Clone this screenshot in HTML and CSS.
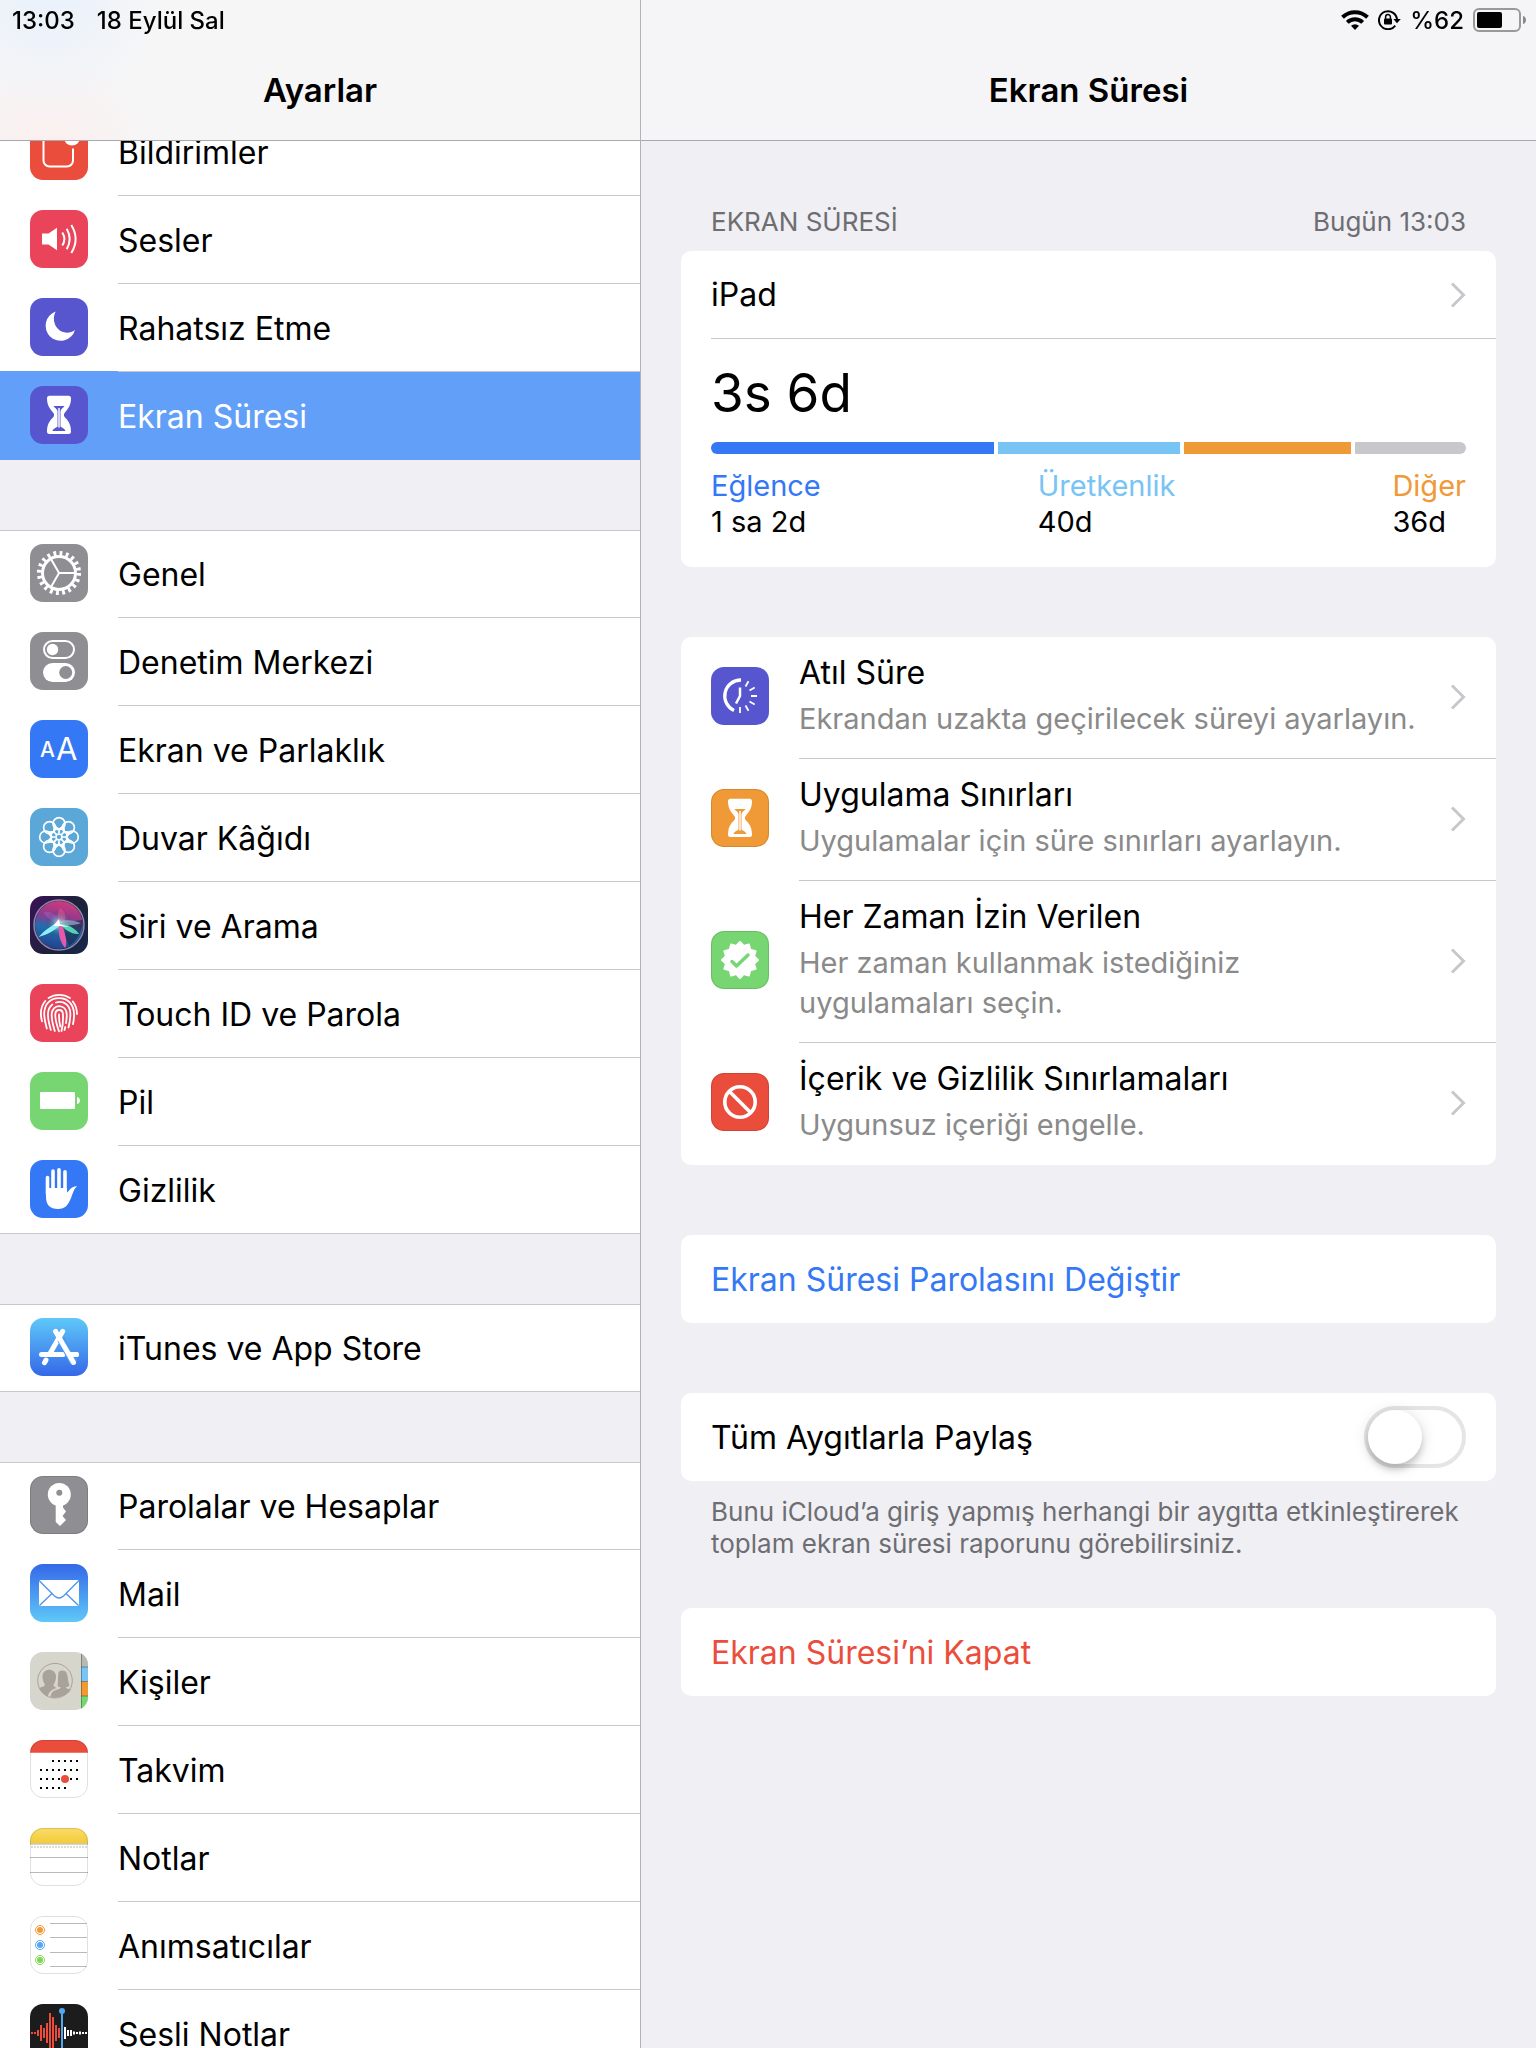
FILE: index.html
```html
<!DOCTYPE html>
<html lang="tr">

<head>
    <meta charset="UTF-8">
    <meta name="viewport" content="width=device-width, initial-scale=1.0">
    <title>Ekran Süresi</title>
    <link rel="stylesheet" href="styles.css">
</head>

<body>

    <!-- Status bar -->
    <div class="status-bar">
        <div class="status-side">
            <span>13:03</span>
            <span>18 Eylül Sal</span>
        </div>
        <div class="status-side status-right">
            <svg width="28" height="20" viewBox="0 0 28 20" fill="none" stroke="#000" stroke-width="4">
                <path d="M1.5 7.2a18 18 0 0 1 25 0" />
                <path d="M6.3 12.4a11 11 0 0 1 15.4 0" />
                <path d="M14 20l-4-4.2a5.8 5.8 0 0 1 8 0z" fill="#000" stroke="none" />
            </svg>
            <svg class="lock" width="23" height="20" viewBox="0 0 23 20" fill="none" stroke="#000" stroke-width="2">
                <path d="M17.2 15.6A9 9 0 1 1 19 10" />
                <path d="M15.4 9h7.4L19 13.2z" fill="#000" stroke="none" />
                <rect x="6" y="8.6" width="8" height="6" rx="1" fill="#000" stroke="none" />
                <path d="M7.6 9V7a2.4 2.4 0 0 1 4.8 0v2" stroke-width="1.5" />
            </svg>
            <span>%62</span>
            <svg width="54" height="24" viewBox="0 0 54 24">
                <rect x="1" y="1" width="46" height="22" rx="5" fill="none" stroke="#999" stroke-width="2" />
                <rect x="4" y="4" width="25" height="16" rx="2" fill="#000" />
                <path d="M50 8c4 1 4 7 0 8z" fill="#888" />
            </svg>
        </div>
    </div>

    <div class="layout">

        <!-- Sidebar -->
        <nav class="sidebar">
            <header class="title-bar title-bar-side">
                <h1>Ayarlar</h1>
            </header>
            <div class="menu">
                <div class="group">
                    <a class="menu-item" href="#">
                        <svg class="icon red" viewBox="0 0 58 58" fill="none">
                            <path d="M32 13.5H19.5a6 6 0 0 0-6 6v19a6 6 0 0 0 6 6h17.500a6 6 0 0 0 6-6V26.500" stroke="#fff" stroke-width="2" />
                            <circle cx="42" cy="15.500" r="8" fill="#fff" />
                        </svg>
                        <span class="label">Bildirimler</span>
                    </a>
                    <a class="menu-item" href="#">
                        <svg class="icon pink" viewBox="0 0 58 58" fill="none">
                            <path d="M12 23.500h6.500L27 17.700v22.600l-8.500-5.800H12z" fill="#fff" />
                            <path d="M32.300 22.500q4.200 6.500 0 13M36.700 18.700q6 10.300 0 20.600M41.300 15q8.600 14 0 28" stroke="#fff" stroke-width="2" />
                        </svg>
                        <span class="label">Sesler</span>
                    </a>
                    <a class="menu-item" href="#">
                        <svg class="icon purple" viewBox="0 0 58 58">
                            <path d="M25.700 13.600A15 15 0 1 0 45 32C38 37.500 28 34 25 26.500C23.200 22 23.600 17.500 25.700 13.600z" fill="#fff" />
                        </svg>
                        <span class="label">Rahatsız Etme</span>
                    </a>
                    <a class="menu-item active" href="#" aria-current="page">
                        <svg class="icon purple" viewBox="0 0 58 58">
                            <path d="M19.500 9.700h19a2.500 2.500 0 0 1 2.500 2.500C41 20 37.500 23 35 26.500c-1.500 2-1.500 3 0 5C37.500 34 41 37.500 41 45.500a2.500 2.500 0 0 1-2.500 2.500h-19a2.500 2.500 0 0 1-2.500-2.500C17 37.500 20.500 34 23 31.500c1.500-2 1.500-3 0-5C20.500 23 17 20 17 12.200a2.500 2.500 0 0 1 2.500-2.500z" fill="#fff" />
                            <path d="M23.500 20h11c-1 2-3.500 2.500-4 5v15.500c1.500 1.500 4 1.500 5 4.500H22.500c1-3 3.500-3 5-4.500V25c-.5-2.500-3-3-4-5z" fill="#5756ce" />
                            <path d="M29 22v19.500" stroke="#fff" stroke-width="1.500" />
                        </svg>
                        <span class="label">Ekran Süresi</span>
                    </a>
                </div>

                <div class="group">
                    <a class="menu-item" href="#">
                        <svg class="icon gray" viewBox="0 0 58 58" fill="none" stroke="#fff">
                            <circle cx="29" cy="29" r="19.700" stroke-width="4.800" stroke-dasharray="2.800 3.389" />
                            <circle cx="29" cy="29" r="16.500" stroke-width="3" />
                            <path d="M29 29h16M29 29l-8-14M29 29l-8 14" stroke-width="2" />
                        </svg>
                        <span class="label">Genel</span>
                    </a>
                    <a class="menu-item" href="#">
                        <svg class="icon gray" viewBox="0 0 58 58">
                            <rect x="14" y="9" width="30" height="17" rx="8.500" fill="none" stroke="#fff" stroke-width="2" />
                            <circle cx="22.500" cy="17.500" r="5.700" fill="#fff" />
                            <rect x="13" y="31" width="32" height="19" rx="9.500" fill="#fff" />
                            <circle cx="35.700" cy="40.500" r="6.500" fill="#8e8e93" />
                        </svg>
                        <span class="label">Denetim Merkezi</span>
                    </a>
                    <a class="menu-item" href="#">
                        <svg class="icon blue" viewBox="0 0 58 58" fill="#fff" aria-hidden="true">
                            <text class="glyph glyph-small" x="10" y="37">A</text>
                            <text class="glyph" x="26" y="40">A</text>
                        </svg>
                        <span class="label">Ekran ve Parlaklık</span>
                    </a>
                    <a class="menu-item" href="#">
                        <svg class="icon sky" viewBox="-29 -29 58 58" fill="none" stroke="#fff" stroke-width="1.700">
                            <defs>
                                <g id="petal">
                                    <circle cy="-13.300" r="6" />
                                    <path d="M0-3.500V-7.500L-4.500-11M0-7.500L4.500-11" />
                                </g>
                            </defs>
                            <circle r="3" />
                            <use href="#petal" />
                            <use href="#petal" transform="rotate(45)" />
                            <use href="#petal" transform="rotate(90)" />
                            <use href="#petal" transform="rotate(135)" />
                            <use href="#petal" transform="rotate(180)" />
                            <use href="#petal" transform="rotate(225)" />
                            <use href="#petal" transform="rotate(270)" />
                            <use href="#petal" transform="rotate(315)" />
                        </svg>
                        <span class="label">Duvar Kâğıdı</span>
                    </a>
                    <a class="menu-item" href="#">
                        <svg class="icon siri" viewBox="0 0 58 58" fill="none">
                            <defs>
                                <linearGradient id="orb" x1="0.600" y1="0" x2="0.400" y2="1">
                                    <stop offset="0" stop-color="#d23a7c" />
                                    <stop offset="0.350" stop-color="#8c3a8e" />
                                    <stop offset="0.600" stop-color="#1f6fae" />
                                    <stop offset="1" stop-color="#243f8c" />
                                </linearGradient>
                                <radialGradient id="orbShade">
                                    <stop offset="0" stop-color="#fff" stop-opacity="0.900" />
                                    <stop offset="0.300" stop-color="#7fe8f0" stop-opacity="0.500" />
                                    <stop offset="1" stop-color="#17233f" stop-opacity="0" />
                                </radialGradient>
                            </defs>
                            <circle cx="29" cy="29" r="24" fill="url(#orb)" />
                            <path d="M30 27L53 24c-1 14-6 20-14 26z" fill="#1c2c4c" opacity="0.700" />
                            <path d="M29 28C20 24 14 20 14 16c8-1 14 4 15 12z" fill="#9a56b8" opacity="0.700" />
                            <path d="M29 28c-3-5-1-11 1-16 6 4 8 11 1 16z" fill="#f0508c" opacity="0.600" />
                            <circle cx="29" cy="28" r="14" fill="url(#orbShade)" />
                            <path d="M30 27C24 27 15 34 8.500 41c8-2 17-7 22-12z" fill="#8cf0f4" />
                            <path d="M30 27c-3 9 0 19 5 25 3-5 0-16-4-25z" fill="#e85aa8" />
                            <path d="M29 27c7 0 16 5 20 11-7 1-15-5-20-11z" fill="#55d3b4" />
                            <path d="M27 26c8-3 17-2 24 1-7 3-16 3-24-1z" fill="#a6c7dd" opacity="0.600" />
                            <path d="M23 30l6-7 1 5 9 3-9-1z" fill="#fff" />
                            <circle cx="29" cy="29" r="25" stroke="#8d87a8" stroke-width="1.500" />
                        </svg>
                        <span class="label">Siri ve Arama</span>
                    </a>
                    <a class="menu-item" href="#">
                        <svg class="icon pink" viewBox="0 0 58 58" fill="none" stroke="#fff" stroke-width="1.800" stroke-linecap="round">
                            <path d="M18.500 14C25 9.700 33.500 9.700 40 14" />
                            <path d="M15.300 17C11 22 9.800 29 12 37.300M42.800 17.500C45.500 21 47 25.500 47 30" />
                            <path d="M16.800 44.500C15 38 14 34 14.200 29C14.700 19 21 14.200 29 14.200c9 0 14.500 6 15 15c.2 4-.3 7.500-1 11" />
                            <path d="M20.800 45.800C18.500 38 17.800 34 18 29.500c.2-4 1.800-7 4.300-9M26 18.500c8-2.500 14 3 14.300 10.500c.2 6-.8 10.500-1.800 14.500" />
                            <path d="M24.800 47C22.300 39 21.500 34 21.700 30c.3-4.500 3.300-7.800 7.300-7.800 4.500 0 7.500 3.300 7.700 8 .2 3-.2 6-.7 9M35.300 43l-.8 3" />
                            <path d="M29 47.300C26 39 25.200 34.500 25.300 30.500c.2-6 7.500-6 7.700 0 .2 6-.3 12-1.500 16.500" />
                            <path d="M29 30.500c0 5 .5 9 1.300 12" />
                        </svg>
                        <span class="label">Touch ID ve Parola</span>
                    </a>
                    <a class="menu-item" href="#">
                        <svg class="icon green" viewBox="0 0 58 58" fill="#fff">
                            <rect x="10" y="20" width="35" height="17" rx="1" />
                            <path d="M47 25c4 1 4 6 0 7z" />
                        </svg>
                        <span class="label">Pil</span>
                    </a>
                    <a class="menu-item" href="#">
                        <svg class="icon blue" viewBox="0 0 58 58" fill="#fff">
                            <path d="M16 28h21v4.500c2.500-1.500 4-6.500 10.300-6.200C43.500 29 43 33.500 41 38c-3 7-5.500 11-13 11-8 0-12-4-12-12z" />
                            <path d="M17.500 17.500V34M23 11v22M29 9.800V33M35 11.700V33" stroke="#fff" stroke-width="3.600" stroke-linecap="round" />
                        </svg>
                        <span class="label">Gizlilik</span>
                    </a>
                </div>

                <div class="group">
                    <a class="menu-item" href="#">
                        <svg class="icon appstore" viewBox="0 0 58 58" fill="none" stroke="#fff" stroke-width="5" stroke-linecap="round">
                            <path d="M32.700 13.300L20 35.500M16 42l-1.500 2.700M11.500 36.500H33M40 36.500h6.500" />
                            <path d="M31 21L44 45" stroke="#4a9af1" stroke-width="8" stroke-linecap="butt" />
                            <path d="M25.500 13.300L43.500 44.500M41 36.500h5.500" />
                        </svg>
                        <span class="label">iTunes ve App Store</span>
                    </a>
                </div>

                <div class="group">
                    <a class="menu-item" href="#">
                        <svg class="icon gray edge" viewBox="0 0 58 58">
                            <path d="M25.700 28h7.300v3.500l3 4-3.500 4.500 3.500 4-6 6-4.300-4z" fill="#fff" />
                            <circle cx="29.300" cy="18.500" r="11.500" fill="#fff" />
                            <circle cx="29.300" cy="16.700" r="3" fill="#8e8e93" />
                        </svg>
                        <span class="label">Parolalar ve Hesaplar</span>
                    </a>
                    <a class="menu-item" href="#">
                        <svg class="icon mail" viewBox="0 0 58 58" fill="none">
                            <rect x="9" y="16" width="40" height="26" rx="1" fill="#fff" />
                            <path d="M9 16.500L24.500 32q4.500 4 9 0L49 16.500M9.500 41.500L22 29.500M48.500 41.500L36 29.500" stroke="#4a94f0" stroke-width="1.300" />
                        </svg>
                        <span class="label">Mail</span>
                    </a>
                    <a class="menu-item" href="#">
                        <svg class="icon contacts" viewBox="0 0 58 58">
                            <path d="M51 0h7v15h-7z" fill="#b9b8b1" />
                            <path d="M51 15h7v14.500h-7z" fill="#77c4f5" />
                            <path d="M51 29.500h7V44h-7z" fill="#f09a37" />
                            <path d="M51 44h7v14h-7z" fill="#77d672" />
                            <path d="M51.500 0v58M51 15h7M51 29.500h7M51 44h7" stroke="#000" stroke-opacity="0.300" />
                            <circle cx="25" cy="28.700" r="17.300" fill="none" stroke="#a9a29b" />
                            <path d="M9 36c3-1 5.500-1.500 6-3.500-2-3-2.500-5-2.500-8 0-9 13.500-9 13.500 0 0 3-.5 5-2.500 8 .3 2 1 2.500 3.500 3.500-5 1-8.500 4-9 8.500C13.500 43 11 40 9 36z" fill="#a9a29b" />
                            <path d="M27.500 33.500c1-3 0-12 1.500-14 2.500-2 6.500-1 7.500 1 2 4 1 9 3 13-1 1.500-2 1.500-3.500 1.500 0 1.500 2 2 5 2.500-3.500 6-11 8.500-20.500 8 .5-5 2.500-7 7-8 2-.5 3-1 3-2.500-1.500 0-2.300-.5-3-1.500z" fill="#a9a29b" />
                        </svg>
                        <span class="label">Kişiler</span>
                    </a>
                    <a class="menu-item" href="#">
                        <svg class="icon paper edge" viewBox="0 0 58 58">
                            <path d="M0 0h58v12.700H0z" fill="#eb4d3d" />
                            <path d="M22 21h26M10 30h38M10 39h38M10 48h26" stroke="#000" stroke-width="2" stroke-dasharray="2 4" />
                            <circle cx="35" cy="39" r="4" fill="#eb4d3d" />
                        </svg>
                        <span class="label">Takvim</span>
                    </a>
                    <a class="menu-item" href="#">
                        <svg class="icon paper edge" viewBox="0 0 58 58">
                            <defs>
                                <linearGradient id="pad" x1="0" y1="0" x2="0" y2="1">
                                    <stop offset="0" stop-color="#f9dc6a" />
                                    <stop offset="1" stop-color="#f3cb36" />
                                </linearGradient>
                            </defs>
                            <path d="M0 0h58v15.500H0z" fill="url(#pad)" />
                            <path d="M0 16h58" stroke="#b1a98c" />
                            <path d="M1 19h57" stroke="#d0d0d0" stroke-width="1.500" stroke-dasharray="2 1" />
                            <path d="M0 29.500h58M0 44.500h58" stroke="#b9b9bd" />
                        </svg>
                        <span class="label">Notlar</span>
                    </a>
                    <a class="menu-item" href="#">
                        <svg class="icon paper edge" viewBox="0 0 58 58" fill="none">
                            <path d="M20 7.500h37M20 21.500h37M20 36.500h37M20 50.500h37" stroke="#b9b9bd" />
                            <g stroke="#f09a37"><circle cx="10" cy="14" r="4.500" /><circle cx="10" cy="14" r="3" fill="#f09a37" stroke="none" /></g>
                            <g stroke="#53a7f0"><circle cx="10" cy="29" r="4.500" /><circle cx="10" cy="29" r="3" fill="#53a7f0" stroke="none" /></g>
                            <g stroke="#7fd551"><circle cx="10" cy="44" r="4.500" /><circle cx="10" cy="44" r="3" fill="#7fd551" stroke="none" /></g>
                        </svg>
                        <span class="label">Anımsatıcılar</span>
                    </a>
                    <a class="menu-item" href="#">
                        <svg class="icon black" viewBox="0 0 58 58" fill="none" stroke-width="2">
                            <path d="M2 28v2M5 28v2M8 26v6M11 21v16M14 24v10M17 19v20M20 9v40M23 13v32M26 21v16M29 24v10" stroke="#eb4d3d" />
                            <path d="M35 23v12M38 26v6M41 26v6M44 27.500v3M47 28v2M50 27.500v3M53 28v2M56 28v2" stroke="#fff" />
                            <path d="M32 7v44" stroke="#53a7f0" />
                            <circle cx="32" cy="7" r="3" fill="#53a7f0" />
                        </svg>
                        <span class="label">Sesli Notlar</span>
                    </a>
                </div>
            </div>
        </nav>

        <!-- Screen time detail -->
        <main class="detail">
            <header class="title-bar">
                <h2>Ekran Süresi</h2>
            </header>
            <div class="content">
                <div class="section-head">
                    <span>EKRAN SÜRESİ</span>
                    <span>Bugün 13:03</span>
                </div>
                <section class="card">
                    <a class="row device" href="#">
                        <span>iPad</span>
                        <svg class="chevron" viewBox="0 0 16 26"><path d="M2 1.500L13.500 13L2 24.500" /></svg>
                    </a>
                    <div class="usage">
                        <div class="total">3s 6d</div>
                        <div class="bar">
                            <span class="fun" style="flex-grow: 283"></span>
                            <span class="work" style="flex-grow: 182"></span>
                            <span class="other" style="flex-grow: 167"></span>
                            <span class="rest" style="flex-grow: 111"></span>
                        </div>
                        <dl class="legend">
                            <div>
                                <dt class="fun-text">Eğlence</dt>
                                <dd>1 sa 2d</dd>
                            </div>
                            <div>
                                <dt class="work-text">Üretkenlik</dt>
                                <dd>40d</dd>
                            </div>
                            <div>
                                <dt class="other-text">Diğer</dt>
                                <dd>36d</dd>
                            </div>
                        </dl>
                    </div>
                </section>

                <section class="card options">
                    <a class="option" href="#">
                        <svg class="icon purple" viewBox="0 0 58 58" fill="none" stroke="#fff">
                            <path d="M30 13a16 16 0 0 0-7 30.500" stroke-width="3.300" />
                            <path d="M29 20.500V29l-4 7.500" stroke-width="2.500" />
                            <path d="M34.500 19.500l3-5.200M38.500 23.500l5.200-3M40 29h6M38.500 34.500l5.200 3M34.500 38.500l3 5.200M29 40v6" stroke-width="1.800" />
                        </svg>
                        <span class="option-body">
                            <span class="option-text">
                                <span class="option-title">Atıl Süre</span>
                                <span class="option-info">Ekrandan uzakta geçirilecek süreyi ayarlayın.</span>
                            </span>
                            <svg class="chevron" viewBox="0 0 16 26"><path d="M2 1.500L13.500 13L2 24.500" /></svg>
                        </span>
                    </a>
                    <a class="option" href="#">
                        <svg class="icon orange edge" viewBox="0 0 58 58">
                            <path d="M19.500 9.700h19a2.500 2.500 0 0 1 2.500 2.500C41 20 37.500 23 35 26.500c-1.500 2-1.500 3 0 5C37.500 34 41 37.500 41 45.500a2.500 2.500 0 0 1-2.500 2.500h-19a2.500 2.500 0 0 1-2.500-2.500C17 37.500 20.500 34 23 31.500c1.500-2 1.500-3 0-5C20.500 23 17 20 17 12.200a2.500 2.500 0 0 1 2.500-2.500z" fill="#fff" />
                            <path d="M23.500 20h11c-1 2-3.500 2.500-4 5v15.500c1.500 1.500 4 1.500 5 4.500H22.500c1-3 3.500-3 5-4.500V25c-.5-2.500-3-3-4-5z" fill="#f09a37" />
                            <path d="M29 22v19.500" stroke="#fff" stroke-width="1.500" />
                        </svg>
                        <span class="option-body">
                            <span class="option-text">
                                <span class="option-title">Uygulama Sınırları</span>
                                <span class="option-info">Uygulamalar için süre sınırları ayarlayın.</span>
                            </span>
                            <svg class="chevron" viewBox="0 0 16 26"><path d="M2 1.500L13.500 13L2 24.500" /></svg>
                        </span>
                    </a>
                    <a class="option" href="#">
                        <svg class="icon green edge" viewBox="-29 -29 58 58">
                            <path d="M0-18L3.700-14L8.900-15.600L10.200-10.200L15.600-8.900L14-3.700L18 0L14 3.700L15.600 8.900L10.200 10.200L8.900 15.600L3.700 14L0 18L-3.700 14L-8.900 15.600L-10.200 10.200L-15.600 8.900L-14 3.700L-18 0L-14-3.700L-15.600-8.900L-10.200-10.200L-8.900-15.600L-3.700-14z" fill="#fff" stroke="#fff" stroke-width="2" stroke-linejoin="round" />
                            <path d="M-8 1.500l4.500 4.500L8-5" fill="none" stroke="#77d672" stroke-width="3.500" stroke-linecap="round" stroke-linejoin="round" />
                        </svg>
                        <span class="option-body">
                            <span class="option-text">
                                <span class="option-title">Her Zaman İzin Verilen</span>
                                <span class="option-info">Her zaman kullanmak istediğiniz<br>uygulamaları seçin.</span>
                            </span>
                            <svg class="chevron" viewBox="0 0 16 26"><path d="M2 1.500L13.500 13L2 24.500" /></svg>
                        </span>
                    </a>
                    <a class="option" href="#">
                        <svg class="icon red edge" viewBox="0 0 58 58" fill="none" stroke="#fff" stroke-width="3.600">
                            <circle cx="29" cy="29" r="15.200" />
                            <path d="M18.500 18.500l21 21" />
                        </svg>
                        <span class="option-body">
                            <span class="option-text">
                                <span class="option-title">İçerik ve Gizlilik Sınırlamaları</span>
                                <span class="option-info">Uygunsuz içeriği engelle.</span>
                            </span>
                            <svg class="chevron" viewBox="0 0 16 26"><path d="M2 1.500L13.500 13L2 24.500" /></svg>
                        </span>
                    </a>
                </section>

                <section class="card">
                    <button class="row link" type="button">Ekran Süresi Parolasını Değiştir</button>
                </section>

                <section class="card">
                    <div class="row">
                        <label for="shareDevices">Tüm Aygıtlarla Paylaş</label>
                        <input class="switch" type="checkbox" id="shareDevices">
                    </div>
                </section>
                <p class="note">Bunu iCloud’a giriş yapmış herhangi bir aygıtta etkinleştirerek toplam ekran süresi raporunu görebilirsiniz.</p>

                <section class="card">
                    <button class="row danger" type="button">Ekran Süresi’ni Kapat</button>
                </section>
            </div>
        </main>
    </div>

</body>

</html>
```

FILE: styles.css
```css
* {
    box-sizing: border-box;
}

body {
    margin: 0;
    background-color: #efeff4;
    color: #000;
}

body,
button {
    font-family: Inter, "Liberation Sans", sans-serif;
    font-size: 32px;
}

a {
    color: inherit;
    text-decoration: none;
}

/* Status bar lies over both title bars */
.status-bar {
    position: absolute;
    top: 0;
    left: 0;
    right: 0;
    z-index: 2;
    height: 40px;
    padding: 0 9px 0 12px;
    display: flex;
    justify-content: space-between;
    align-items: center;
    font-size: 24px;
    font-weight: 500;
}

.status-side {
    display: flex;
    align-items: center;
    gap: 22px;
}

.status-right {
    gap: 9px;
}

.layout {
    display: grid;
    grid-template-columns: 5fr 7fr;
    height: 100vh;
}

.sidebar,
.detail {
    position: relative;
    min-width: 0;
    overflow: hidden;
}

.detail {
    border-left: 1px solid #b2b2b5;
}

/* Title bars stay above the scrolled lists */
.title-bar {
    position: absolute;
    top: 0;
    left: 0;
    right: 0;
    z-index: 1;
    height: 141px;
    padding-top: 40px;
    display: flex;
    justify-content: center;
    align-items: center;
    background-color: #f5f5f7;
    border-bottom: 1px solid #a9a9ad;
}

.title-bar-side {
    background-color: #f6f6f7;
    background-image: radial-gradient(circle at 48px 0, #e9f1fb, transparent 110px),
        radial-gradient(circle at 48px 160px, #fbeeed, transparent 110px);
}

.title-bar h1,
.title-bar h2 {
    margin: 0;
    font-size: 33px;
    font-weight: 600;
}

.menu {
    height: 100%;
    padding-top: 108px;
    overflow-y: auto;
    scrollbar-width: none;
    background-color: #efeff4;
}

.group {
    background-color: #fff;
    margin-bottom: 70px;
    box-shadow: inset 0 1px 0 #c8c7cc, inset 0 -1px 0 #c8c7cc;
}

.group:last-child {
    margin-bottom: 0;
}

.menu-item {
    display: flex;
    gap: 30px;
    height: 88px;
    padding-left: 30px;
}

.menu-item .icon {
    margin-top: 14px;
}

.menu-item .label {
    flex: 1;
    padding-top: 2px;
    line-height: 86px;
    border-bottom: 1px solid #c8c7cc;
    white-space: nowrap;
}

.menu-item:last-child .label {
    border-bottom: none;
}

.menu-item.active {
    background-color: #629ff8;
    box-shadow: 0 -1px 0 #629ff8;
    color: #fff;
}

/* Icons */
.icon {
    display: block;
    flex: none;
    width: 58px;
    height: 58px;
    border-radius: 13px;
}

.glyph {
    font-family: Inter, sans-serif;
    font-size: 31px;
    font-weight: 400;
}

.glyph-small {
    font-size: 21px;
    font-weight: 500;
}

.edge {
    outline: 1px solid rgba(0, 0, 0, 0.12);
    outline-offset: -1px;
}

.red {
    background-color: #eb4d3d;
}

.pink {
    background-color: #ea445a;
}

.purple {
    background-color: #5756ce;
}

.gray {
    background-color: #8e8e93;
}

.blue {
    background-color: #3478f6;
}

.sky {
    background-color: #5aa7d8;
}

.green {
    background-color: #77d672;
}

.orange {
    background-color: #f09a37;
}

.black {
    background-color: #1c1c1c;
}

.paper {
    background-color: #fff;
}

.contacts {
    background-color: #d6d6cd;
}

.siri {
    background-image: linear-gradient(120deg, #3a1258, #1c2238 60%, #17284f);
}

.appstore {
    background-image: linear-gradient(#5fc8f8, #3568e8);
}

.mail {
    background-image: linear-gradient(#3568e8, #5fc8f8);
}

/* Detail column */
.content {
    padding: 201px 40px 40px;
}

.section-head {
    display: flex;
    justify-content: space-between;
    padding: 0 30px 9px;
    font-size: 26px;
    line-height: 41px;
    color: #6d6d72;
}

.card {
    background-color: #fff;
    border-radius: 10px;
    margin-bottom: 70px;
    overflow: hidden;
}

.row {
    display: flex;
    justify-content: space-between;
    align-items: center;
    width: 100%;
    height: 88px;
    padding: 0 30px;
    border: none;
    background: none;
    text-align: left;
}

.device {
    height: 87px;
}

.chevron {
    flex: none;
    width: 16px;
    height: 26px;
    fill: none;
    stroke: #c7c7cc;
    stroke-width: 3px;
}

.link {
    color: #3478f6;
    cursor: pointer;
}

.danger {
    color: #eb4d3d;
    cursor: pointer;
}

.usage {
    margin-left: 30px;
    padding: 24px 30px 27px 0;
    border-top: 1px solid #c8c7cc;
}

.total {
    font-size: 53px;
    line-height: 60px;
}

.bar {
    display: flex;
    gap: 4px;
    height: 12px;
    margin-top: 19px;
    border-radius: 6px;
    overflow: hidden;
}

.fun {
    background-color: #3478f6;
}

.work {
    background-color: #77c4f5;
}

.other {
    background-color: #f09a37;
}

.rest {
    background-color: #c7c7cc;
}

.legend {
    display: flex;
    justify-content: space-between;
    margin: 14px 0 0;
    font-size: 29px;
    line-height: 36px;
}

.legend dd {
    margin: 0;
}

.fun-text {
    color: #3478f6;
}

.work-text {
    color: #77c4f5;
}

.other-text {
    color: #f09a37;
}

.option {
    display: flex;
    align-items: center;
    gap: 30px;
    padding-left: 30px;
}

.option .icon {
    margin-bottom: 4px;
}

.option .chevron {
    margin-top: 4px;
}

.option-body {
    flex: 1;
    display: flex;
    justify-content: space-between;
    align-items: center;
    padding: 14px 30px 19px 0;
    border-bottom: 1px solid #c8c7cc;
}

.option:last-child .option-body {
    border-bottom-color: transparent;
}

.option-text {
    display: flex;
    flex-direction: column;
    gap: 4px;
}

.option-title {
    line-height: 44px;
}

.option-info {
    font-size: 29px;
    line-height: 40px;
    color: #8a8a8a;
}

.switch {
    appearance: none;
    flex: none;
    width: 102px;
    height: 62px;
    margin: 0;
    border: 4px solid #e5e5e5;
    border-radius: 31px;
    background-color: #fff;
    cursor: pointer;
}

.switch::before {
    content: "";
    display: block;
    width: 54px;
    height: 54px;
    border-radius: 50%;
    background-color: #fff;
    box-shadow: 0 6px 6px rgba(0, 0, 0, 0.15), 0 2px 16px rgba(0, 0, 0, 0.15);
}

.switch:checked {
    background-color: #4cd964;
    border-color: #4cd964;
}

.switch:checked::before {
    margin-left: auto;
}

.note {
    margin: -55px 30px 48px;
    font-size: 26px;
    line-height: 32px;
    color: #6d6d72;
}
```
